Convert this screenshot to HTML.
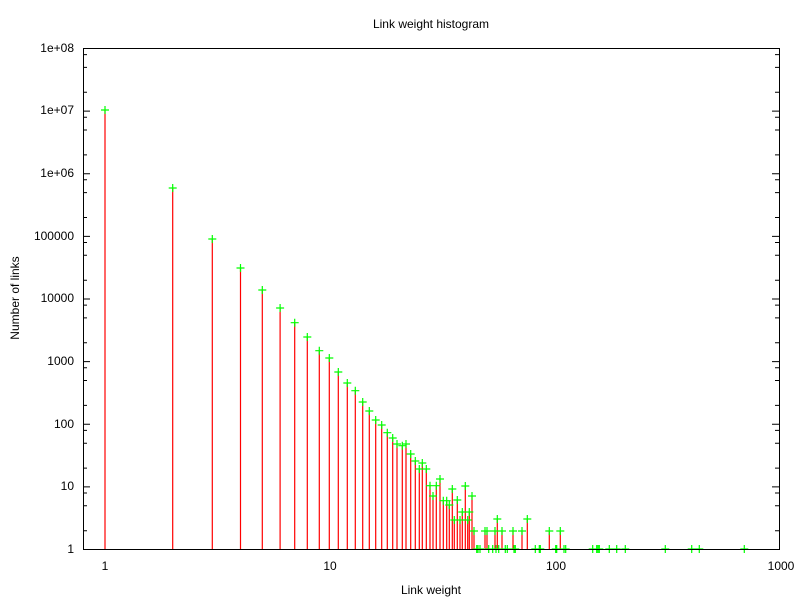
<!DOCTYPE html>
<html><head><meta charset="utf-8"><style>
html,body{margin:0;padding:0;background:#fff;}
svg{display:block;font-family:"Liberation Sans",Arial,sans-serif;font-size:12px;}
</style></head><body>
<svg width="800" height="600" xmlns="http://www.w3.org/2000/svg">
<rect width="800" height="600" fill="#fff"/>
<text x="431" y="28" text-anchor="middle">Link weight histogram</text>
<g text-anchor="end">
<text x="74" y="52">1e+08</text>
<text x="74" y="114">1e+07</text>
<text x="74" y="177">1e+06</text>
<text x="74" y="240">100000</text>
<text x="74" y="302">10000</text>
<text x="74" y="365">1000</text>
<text x="74" y="428">100</text>
<text x="74" y="490">10</text>
<text x="74" y="553">1</text>
</g>
<g text-anchor="middle">
<text x="105" y="570">1</text>
<text x="330" y="570">10</text>
<text x="556" y="570">100</text>
<text x="781" y="570">1000</text>
<text x="431" y="594">Link weight</text>
</g>
<text transform="translate(19,298) rotate(-90)" text-anchor="middle">Number of links</text>
<g stroke="#000" stroke-width="1">
<path d="M83.5,48.5 H779.5 V549.5 H83.5 Z" fill="none"/>
<path d="M83,48.5h7M83,111.1h7M83,173.8h7M83,236.4h7M83,299h7M83,361.6h7M83,424.3h7M83,486.9h7M779,48.5h-7M779,111.1h-7M779,173.8h-7M779,236.4h-7M779,299h-7M779,361.6h-7M779,424.3h-7M779,486.9h-7"/>
<path d="M83,54.6h4M83,67.4h4M83,92.3h4M83,117.2h4M83,130h4M83,154.9h4M83,179.8h4M83,192.6h4M83,217.5h4M83,242.5h4M83,255.3h4M83,280.2h4M83,305.1h4M83,317.9h4M83,342.8h4M83,367.7h4M83,380.5h4M83,405.4h4M83,430.4h4M83,443.2h4M83,468.1h4M83,493h4M83,505.8h4M83,530.7h4"/>
<path d="M779,54.6h-4M779,67.4h-4M779,92.3h-4M779,117.2h-4M779,130h-4M779,154.9h-4M779,179.8h-4M779,192.6h-4M779,217.5h-4M779,242.5h-4M779,255.3h-4M779,280.2h-4M779,305.1h-4M779,317.9h-4M779,342.8h-4M779,367.7h-4M779,380.5h-4M779,405.4h-4M779,430.4h-4M779,443.2h-4M779,468.1h-4M779,493h-4M779,505.8h-4M779,530.7h-4"/>
</g>
<g stroke="#f00" stroke-width="1.2">
<path d="M105,549V110M172.7,549V188M212.3,549V239M240.5,549V268M262.3,549V290M280.1,549V308M294.7,549V322.7M307.3,549V337M319.3,549V350.7M329.3,549V358M338.3,549V372M347.3,549V383M355.3,549V390.7M362.7,549V402M369.3,549V411M375.7,549V420M381.7,549V425M387.3,549V432.7M392.7,549V438M397,549V444M402.3,549V445.7M406,549V444M410.7,549V454M415.3,549V461M419.3,549V469M422.3,549V463M426.3,549V469M430,549V485.7M433,549V496M436.3,549V485.7M440,549V479M443.3,549V500.7M446.7,549V500.7M449.3,549V505M452.3,549V489M454.3,549V520M457.3,549V500M460,549V520M462.3,549V512M465.3,549V486M467.7,549V520M469.3,549V512M472,549V496M474,549V531M485,549V531M487,549V531M495,549V531M497.3,549V519M502,549V531M513,549V531M522,549V531M527.3,549V519M549.3,549V531M560.3,549V531"/>
</g>
<g stroke="#0f0" stroke-width="1.2" fill="none" id="pts">
<path d="
M101,110h8M105,106v8
M168.7,188h8M172.7,184v8
M208.3,239h8M212.3,235v8
M236.5,268h8M240.5,264v8
M258.3,290h8M262.3,286v8
M276.1,308h8M280.1,304v8
M290.7,322.7h8M294.7,318.7v8
M303.3,337h8M307.3,333v8
M315.3,350.7h8M319.3,346.7v8
M325.3,358h8M329.3,354v8
M334.3,372h8M338.3,368v8
M343.3,383h8M347.3,379v8
M351.3,390.7h8M355.3,386.7v8
M358.7,402h8M362.7,398v8
M365.3,411h8M369.3,407v8
M371.7,420h8M375.7,416v8
M377.7,425h8M381.7,421v8
M383.3,432.7h8M387.3,428.7v8
M388.7,438h8M392.7,434v8
M393,444h8M397,440v8
M398.3,445.7h8M402.3,441.7v8
M402,444h8M406,440v8
M406.7,454h8M410.7,450v8
M411.3,461h8M415.3,457v8
M415.3,469h8M419.3,465v8
M418.3,463h8M422.3,459v8
M422.3,469h8M426.3,465v8
M426,485.7h8M430,481.7v8
M429,496h8M433,492v8
M432.3,485.7h8M436.3,481.7v8
M436,479h8M440,475v8
M439.3,500.7h8M443.3,496.7v8
M442.7,500.7h8M446.7,496.7v8
M445.3,505h8M449.3,501v8
M448.3,489h8M452.3,485v8
M450.3,520h8M454.3,516v8
M453.3,500h8M457.3,496v8
M456,520h8M460,516v8
M458.3,512h8M462.3,508v8
M461.3,486h8M465.3,482v8
M463.7,520h8M467.7,516v8
M465.3,512h8M469.3,508v8
M468,496h8M472,492v8
M470,531h8M474,527v8
M481,531h8M485,527v8
M483,531h8M487,527v8
M491,531h8M495,527v8
M493.3,519h8M497.3,515v8
M498,531h8M502,527v8
M509,531h8M513,527v8
M518,531h8M522,527v8
M523.3,519h8M527.3,515v8
M545.3,531h8M549.3,527v8
M556.3,531h8M560.3,527v8
"/>
<path d="M476.7,545v8M478,545v8M480,545v8M488.7,545v8M492.7,545v8M496,545v8M498.7,545v8M505.3,545v8M507.3,545v8M514,545v8M515.3,545v8M535.3,545v8M539.3,545v8M540.3,545v8M555.7,545v8M556.7,545v8M564,545v8M565.7,545v8M592.7,545v8M596.7,545v8M598,545v8M599.3,545v8M609.3,545v8M616.7,545v8M625.3,545v8M665.3,545v8M691.7,545v8M699.3,545v8M744.3,545v8"/>
<path d="M472.7,549h8M474,549h8M476,549h8M484.7,549h8M488.7,549h8M492,549h8M494.7,549h8M501.3,549h8M503.3,549h8M510,549h8M511.3,549h8M531.3,549h8M535.3,549h8M536.3,549h8M551.7,549h8M552.7,549h8M560,549h8M561.7,549h8M588.7,549h8M592.7,549h8M594,549h8M595.3,549h8M605.3,549h8M612.7,549h8M621.3,549h8M661.3,549h8M687.7,549h8M695.3,549h8M740.3,549h8"/>
</g>
<path d="M83,549.5H779.5" stroke="#000" stroke-width="1"/>
</svg>
</body></html>
